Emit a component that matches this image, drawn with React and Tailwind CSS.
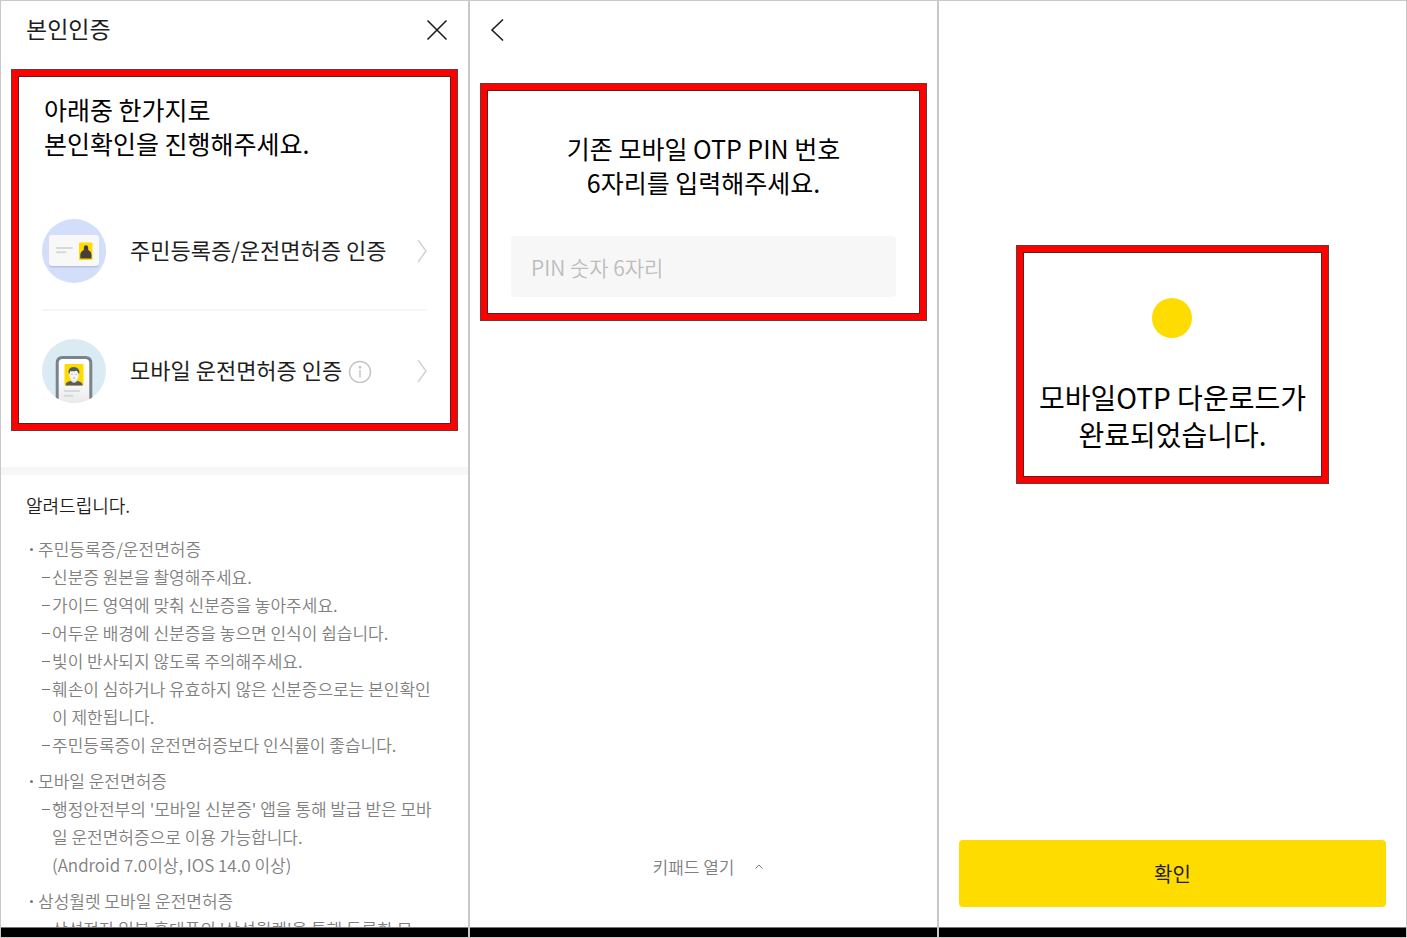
import React from "react";

const notes = [
  {
    title: "주민등록증/운전면허증",
    items: [
      ["신분증 원본을 촬영해주세요."],
      ["가이드 영역에 맞춰 신분증을 놓아주세요."],
      ["어두운 배경에 신분증을 놓으면 인식이 쉽습니다."],
      ["빛이 반사되지 않도록 주의해주세요."],
      ["훼손이 심하거나 유효하지 않은 신분증으로는 본인확인이 제한됩니다."],
      ["주민등록증이 운전면허증보다 인식률이 좋습니다."],
    ],
  },
  {
    title: "모바일 운전면허증",
    items: [
      [
        "행정안전부의 '모바일 신분증' 앱을 통해 발급 받은 모바일 운전면허증으로 이용 가능합니다.",
        "(Android 7.0이상, IOS 14.0 이상)",
      ],
    ],
  },
  {
    title: "삼성월렛 모바일 운전면허증",
    items: [["삼성전자 일부 휴대폰의 '삼성월렛'을 통해 등록한 모"]],
  },
];

function Panel({ children, label }) {
  return (
    <section aria-label={label} className="flex h-screen min-w-0 flex-col border border-[#c8c8c8] bg-white">
      <div className="flex min-h-0 flex-1 flex-col overflow-hidden">{children}</div>
      <div className="h-[10px] shrink-0 border-t border-[#777] bg-black" />
    </section>
  );
}

function Highlight({ className, children }) {
  return (
    <div
      className={
        "shrink-0 border-[6px] border-[#ff0000] shadow-[0_0_0_1px_#6b3a3a,inset_0_0_0_1px_#5c2020] " + className
      }
    >
      {children}
    </div>
  );
}

function CardIcon() {
  return (
    <svg viewBox="0 0 64 64" className="size-16 shrink-0" aria-hidden="true">
      <circle cx="32" cy="32" r="32" fill="#d3defa" />
      <rect x="7" y="17.5" width="50" height="31" rx="3" fill="#aab6d6" opacity="0.7" />
      <rect x="7" y="16" width="50" height="31" rx="3" fill="#f8f8f9" />
      <rect x="14" y="28" width="17" height="2" rx="1" fill="#d4d9dc" />
      <rect x="14" y="32.3" width="10.5" height="2" rx="1" fill="#d4d9dc" />
      <rect x="37" y="23.5" width="13.5" height="17.5" rx="1" fill="#ffdc00" />
      <path
        d="M41.8 28.5 Q42 26.3 44 26.3 Q46 26.3 46.2 28.500 V31 Q49.5 32.5 49.5 36 V39.5 H38.3 V36 Q38.3 32.5 41.8 31 Z"
        fill="#45403b"
      />
    </svg>
  );
}

function PhoneIcon() {
  return (
    <svg viewBox="0 0 64 64" className="size-16 shrink-0" aria-hidden="true">
      <defs>
        <clipPath id="phone-clip">
          <circle cx="32" cy="32" r="32" />
        </clipPath>
        <linearGradient id="phone-fill" x1="0" y1="18" x2="0" y2="64" gradientUnits="userSpaceOnUse">
          <stop offset="0.4" stopColor="#ffffff" />
          <stop offset="1" stopColor="#eaeaea" />
        </linearGradient>
      </defs>
      <circle cx="32" cy="32" r="32" fill="#dbebf4" />
      <g clipPath="url(#phone-clip)">
        <rect x="15.2" y="18.5" width="33.6" height="60" rx="5.5" fill="url(#phone-fill)" />
        <path d="M15.2 60 V24 Q15.2 18.5 20.7 18.5 H43.3 Q48.8 18.5 48.8 24 V60" fill="none" stroke="#7a828c" strokeWidth="3" />
        <rect x="22.5" y="25" width="19" height="21.5" rx="1" fill="#ffdc00" />
        <path d="M23.5 46.5 Q23.5 42.5 29 42 H35 Q40.700 42.5 40.7 46.5 Z" fill="#555b63" />
        <path d="M29.3 39 H34.7 V42.5 Q32 45 29.3 42.5 Z" fill="#dde1e4" />
        <path d="M27.5 32 H36.5 V37 Q36 41.500 32 41.8 Q28 41.5 27.5 37 Z" fill="#f3f4f5" />
        <path d="M26.7 34.5 Q25.8 28 31.5 28 Q38 28 37.3 34.5 H36.3 Q35.8 32.5 34.5 31.8 Q31 32.8 28.5 32 Q27.8 33 27.7 34.5 Z" fill="#555b63" />
        <path d="M29.3 35.4 H30.6 M33.5 35.4 H34.8 M31 39 H33" stroke="#9aa0a6" strokeWidth="0.8" />
        <rect x="21.5" y="51" width="16.5" height="2" rx="1" fill="#d4d9dc" />
        <rect x="21.5" y="55.7" width="10" height="2" rx="1" fill="#d4d9dc" />
      </g>
    </svg>
  );
}

function Chevron() {
  return (
    <svg viewBox="0 0 10 24" className="ml-auto h-6 w-[10px] shrink-0" fill="none" stroke="#d2d2d2" strokeWidth="1.5" aria-hidden="true">
      <path d="M1 1 L9 12 L1 23" />
    </svg>
  );
}

export default function App() {
  return (
    <main className="grid h-screen grid-cols-3 bg-white font-['Noto_Sans_CJK_KR',sans-serif] text-black">
      <Panel label="본인인증">
        <header className="flex h-[58px] shrink-0 items-center justify-between pr-5 pl-[25px]">
          <h1 className="pb-1 text-[23px] leading-8 font-normal text-[#1e1e1e]">본인인증</h1>
          <button type="button" aria-label="닫기">
            <svg viewBox="0 0 22 22" className="size-[22px]" fill="none" stroke="#1e1e1e" strokeWidth="1.6" aria-hidden="true">
              <path d="M1.5 1.5 L20.5 20.5 M20.5 1.5 L1.5 20.5" />
            </svg>
          </button>
        </header>
        <Highlight className="mx-[11px] mt-[11px] px-6 pt-4 pb-[21px]">
          <h2 className="pl-0.5 text-[25px] leading-[34px] font-normal">
            아래중 한가지로
            <br />
            본인확인을 진행해주세요.
          </h2>
          <ul className="mt-[59px]">
            <li className="border-b-2 border-[#f6f6f6] pb-[26px]">
              <button type="button" className="flex w-full items-center text-left text-[22px] leading-8 text-[#1e1e1e]">
                <CardIcon />
                <span className="pb-1 pl-6">주민등록증/운전면허증 인증</span>
                <Chevron />
              </button>
            </li>
            <li className="pt-7">
              <button type="button" className="flex w-full items-center text-left text-[22px] leading-8 text-[#1e1e1e]">
                <PhoneIcon />
                <span className="pb-1 pl-6">모바일 운전면허증 인증</span>
                <svg viewBox="0 0 24 24" className="ml-1.5 size-6 shrink-0" fill="none" stroke="#c6c6c6" strokeWidth="1.5" aria-hidden="true">
                  <circle cx="12" cy="13" r="10.5" />
                  <path d="M12 11 V18.5" />
                  <circle cx="12" cy="8.3" r="0.7" fill="#c6c6c6" />
                </svg>
                <Chevron />
              </button>
            </li>
          </ul>
        </Highlight>
        <div className="mt-[37px] h-2 shrink-0 bg-[#f7f7f7]" />
        <div className="pt-4 pr-7 pl-[25px]">
          <h2 className="text-[18px] leading-7 font-[350] text-[#1e1e1e]">알려드립니다.</h2>
          <ul className="mt-4 flex flex-col gap-2 text-[17px] leading-7 font-[350] text-[#808080]">
            {notes.map((group) => (
              <li key={group.title}>
                <div className="flex items-center gap-[5px] pl-1">
                  <span className="size-[3px] rounded-full bg-[#777]" />
                  <span>{group.title}</span>
                </div>
                <ul className="pl-4">
                  {group.items.map((lines) => (
                    <li key={lines[0]} className="flex">
                      <span className="flex h-7 w-[10px] shrink-0 items-center">
                        <span className="h-px w-2 bg-[#777]" />
                      </span>
                      <span>
                        {lines.map((line) => (
                          <span key={line} className="block">
                            {line}
                          </span>
                        ))}
                      </span>
                    </li>
                  ))}
                </ul>
              </li>
            ))}
          </ul>
        </div>
      </Panel>

      <Panel label="PIN 번호 입력">
        <header className="flex h-[58px] shrink-0 items-center pl-5">
          <button type="button" aria-label="뒤로">
            <svg viewBox="0 0 14 24" className="h-6 w-[14px]" fill="none" stroke="#1e1e1e" strokeWidth="1.6" aria-hidden="true">
              <path d="M13 1.5 L2 12 L13 22.5" />
            </svg>
          </button>
        </header>
        <Highlight className="mx-[11px] mt-[25px] px-6 pt-[41px] pb-[17px]">
          <label htmlFor="pin" className="block text-center text-[25px] leading-[34px]">
            기존 모바일 OTP PIN 번호
            <br />
            6자리를 입력해주세요.
          </label>
          <input
            id="pin"
            type="text"
            inputMode="numeric"
            maxLength={6}
            placeholder="PIN 숫자 6자리"
            className="mt-[37px] block h-[61px] w-full rounded bg-[#f7f7f7] px-5 text-[21px] font-[350] outline-none placeholder:text-[#bdbdbd]"
          />
        </Highlight>
        <button
          type="button"
          className="mx-auto mt-auto mb-[46px] flex items-center gap-5 pl-2 text-[17px] leading-7 font-[350] text-[#808080]"
        >
          키패드 열기
          <svg viewBox="0 0 8 6" className="h-[6px] w-2" fill="none" stroke="#777" aria-hidden="true">
            <path d="M0.5 4.5 L4 1 L7.5 4.5" />
          </svg>
        </button>
      </Panel>

      <Panel label="다운로드 완료">
        <Highlight className="mx-auto mt-[245px] w-2/3 pt-[46px] pb-6">
          <div className="mx-auto size-10 rounded-full bg-[#ffdc00]" />
          <h2 className="mt-[41px] text-center text-[28px] leading-[37px] font-normal whitespace-nowrap">
            모바일OTP 다운로드가
            <br />
            완료되었습니다.
          </h2>
        </Highlight>
        <button type="button" className="mx-5 mt-auto mb-5 h-[67px] rounded bg-[#ffdc00] text-[20px] text-[#1e1e1e]">
          확인
        </button>
      </Panel>
    </main>
  );
}
